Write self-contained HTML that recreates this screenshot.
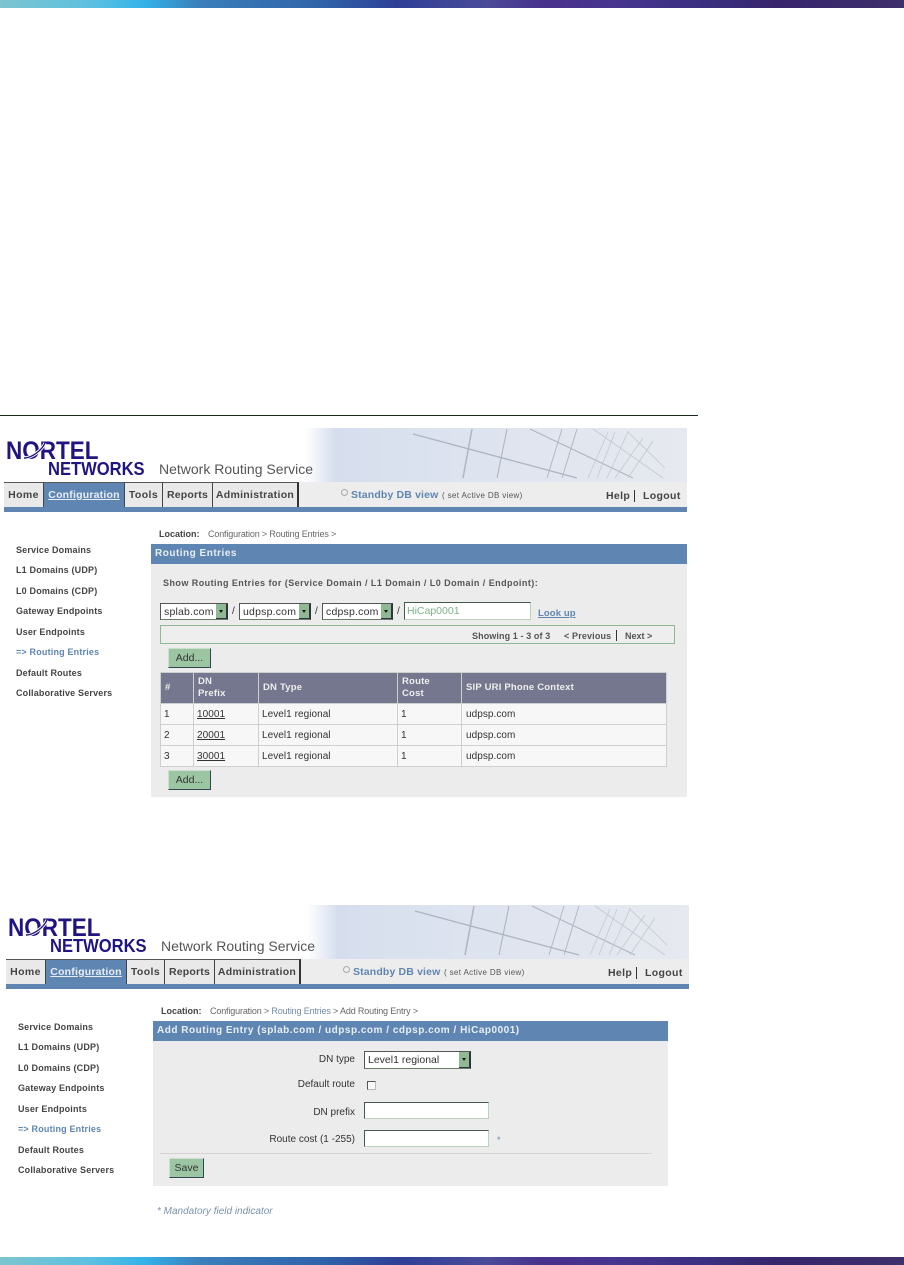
<!DOCTYPE html>
<html><head><meta charset="utf-8"><style>
html,body{margin:0;padding:0;background:#fff}
#p{position:relative;width:904px;height:1265px;overflow:hidden;background:#fff;font-family:"Liberation Sans",sans-serif}
.bar{position:absolute;left:0;width:904px;height:8px;background:linear-gradient(90deg,#7cc4cf 0,#5dc0e0 10%,#33b2e8 16%,#3b7fbb 22%,#2f62a8 36%,#2e3f96 44%,#4a4a98 54%,#48308c 60%,#47358f 68%,#3a2f80 78%,#37246c 86%,#3f2f6c 100%)}
.s{position:absolute;left:0;width:700px;height:400px;filter:blur(.35px)}
.t{position:absolute;white-space:nowrap;color:#333;font-size:9px;line-height:12px}
.b{font-weight:bold}
.m{letter-spacing:.18px;color:#444}
.box{position:absolute;box-sizing:border-box}
.tab{position:absolute;top:482px;height:25px;box-sizing:border-box;background:#e9e9e9;border-top:1px solid #555;border-right:1px solid #444;text-align:center;font-size:10.5px;line-height:25px;font-weight:bold;color:#444;letter-spacing:.4px}
.nav{color:#444}
.sel{position:absolute;box-sizing:border-box;background:#fff;border:1px solid #555;border-right:1px solid #333;border-bottom:1px solid #6a7d6a;font-size:10.5px;line-height:16px;color:#333;padding-left:3px;letter-spacing:.2px}
.sel i{position:absolute;right:0;top:0;bottom:0;width:11px;background:#8fb993;border-right:1px solid #334;border-bottom:1px solid #334;box-sizing:border-box}
.sel i:after{content:"";position:absolute;left:3px;top:6px;border:2px solid transparent;border-top:3px solid #111}
.btn{position:absolute;box-sizing:border-box;background:#9cc6a2;border-top:1px solid #cde0cf;border-left:1px solid #cde0cf;border-right:1px solid #345;border-bottom:1px solid #345;font-size:10.5px;color:#333;text-align:center}
.th{position:absolute;background:#75778f;color:#eee;font-size:9.5px;line-height:12px;font-weight:bold;box-sizing:border-box;padding-left:4px;display:flex;align-items:center;letter-spacing:.2px}
.td{position:absolute;background:#f7f7f7;color:#333;font-size:10px;box-sizing:border-box;padding-left:3px;line-height:22px;letter-spacing:.05px}
.inp{position:absolute;box-sizing:border-box;background:#fff;border:1px solid #bcd0be;border-top:1px solid #46584c;border-left:1px solid #46584c}
.lg{position:absolute;left:6px;top:437px;font-weight:bold;font-size:25px;line-height:28px;color:#1f1480;transform:scaleX(.9);transform-origin:left;white-space:nowrap}
.lg2{position:absolute;left:48px;top:460px;font-weight:bold;font-size:18px;line-height:19px;color:#1f1480;transform:scaleX(.92);transform-origin:left;white-space:nowrap}
</style></head><body><div id="p">
<div class="bar" style="top:0"></div>
<div class="bar" style="top:1257px"></div>
<div class="box" style="left:0;top:415px;width:698px;height:1px;background:#1a2a1a"></div>

<!-- SCREEN 1 -->
<div class="s" style="top:0;left:0">
<div class="box" style="left:305px;top:428px;width:382px;height:54px;background:linear-gradient(90deg,#fff 0,#d6deee 8%,#dde3ef 40%,#e6e9ef 100%)"></div>
<svg style="position:absolute;left:305px;top:428px" width="382" height="54" fill="none" stroke="#aeb6c2"><path d="M108 6L272 50" stroke-width="1.4"/><path d="M167 1L158 50" stroke-width="1.5"/><path d="M202 1L192 50" stroke-width="1.1"/><path d="M225 1L328 50" stroke-width="1.1"/><path d="M257 1L242 50" stroke-width=".9"/><path d="M272 1L257 50" stroke-width=".9"/><g stroke="#c2c8d2" stroke-width=".8"><path d="M288 1L358 50"/><path d="M303 4L283 50"/><path d="M310 4L292 50"/><path d="M323 4L302 50"/><path d="M338 10L310 50"/><path d="M348 13L323 50"/><path d="M322 3L360 40"/></g></svg>
<div class="lg">NORTEL</div>
<svg style="position:absolute;left:20px;top:438px" width="28" height="26" fill="none"><path d="M4 20C12 20 22 12 25 5" stroke="#fff" stroke-width="3.2"/><path d="M4 20C12 20 22 12 25 5" stroke="#1f1480" stroke-width="1.4"/></svg>
<div class="lg2">NETWORKS</div>
<div class="t" style="left:159px;top:461px;font-size:14px;line-height:17px;color:#555">Network Routing Service</div>
<div class="box" style="left:4px;top:482px;width:683px;height:25px;background:#ededed"></div>
<div class="box" style="left:4px;top:507px;width:683px;height:5px;background:#5f86b2"></div>
<div class="tab" style="left:4px;width:40px">Home</div>
<div class="tab" style="left:44px;width:81px;background:#5f86b2;color:#e8eef5;text-decoration:underline;letter-spacing:.2px">Configuration</div>
<div class="tab" style="left:125px;width:38px">Tools</div>
<div class="tab" style="left:163px;width:50px;letter-spacing:.2px">Reports</div>
<div class="tab" style="left:213px;width:86px;letter-spacing:.3px;border-right:2px solid #333">Administration</div>
<div class="box" style="left:341px;top:489px;width:7px;height:7px;border:1px solid #aaa;border-radius:50%"></div>
<div class="t b" style="left:351px;top:489px;font-size:10.5px;color:#5f86b2;letter-spacing:.15px">Standby DB view</div>
<div class="t" style="left:442px;top:490px;font-size:8px;color:#555;letter-spacing:.35px">( set Active DB view)</div>
<div class="t b nav" style="left:606px;top:490px;font-size:10.5px;letter-spacing:.35px">Help</div>
<div class="box" style="left:634px;top:490px;width:1px;height:12px;background:#333"></div>
<div class="t b nav" style="left:643px;top:490px;font-size:10.5px;letter-spacing:.35px">Logout</div>

<div class="t b" style="left:159px;top:528px;font-size:9px;color:#444">Location:</div>
<div class="t" style="left:208px;top:528px;font-size:9px;color:#666;letter-spacing:-.15px">Configuration &gt; Routing Entries &gt;</div>
<div class="t b m" style="left:16px;top:544px">Service Domains</div>
<div class="t b m" style="left:16px;top:564px">L1 Domains (UDP)</div>
<div class="t b m" style="left:16px;top:585px">L0 Domains (CDP)</div>
<div class="t b m" style="left:16px;top:605px">Gateway Endpoints</div>
<div class="t b m" style="left:16px;top:626px">User Endpoints</div>
<div class="t b m" style="left:16px;top:646px;color:#5f86b2">=&gt; Routing Entries</div>
<div class="t b m" style="left:16px;top:667px">Default Routes</div>
<div class="t b m" style="left:16px;top:687px">Collaborative Servers</div>

<div class="box" style="left:151px;top:564px;width:536px;height:233px;background:#ececec"></div>
<div class="box" style="left:151px;top:544px;width:536px;height:20px;background:#5f86b2"></div>
<div class="t b" style="left:155px;top:548px;font-size:10px;color:#e8eef5;letter-spacing:.5px">Routing Entries</div>
<div class="t b" style="left:163px;top:577px;font-size:9px;color:#555;letter-spacing:.45px">Show Routing Entries for (Service Domain / L1 Domain / L0 Domain / Endpoint):</div>

<div class="sel" style="left:160px;top:603px;width:68px;height:17px">splab.com<i></i></div>
<div class="t" style="left:232px;top:606px;font-size:10px">/</div>
<div class="sel" style="left:239px;top:603px;width:72px;height:17px">udpsp.com<i></i></div>
<div class="t" style="left:315px;top:606px;font-size:10px">/</div>
<div class="sel" style="left:322px;top:603px;width:71px;height:17px">cdpsp.com<i></i></div>
<div class="t" style="left:397px;top:606px;font-size:10px">/</div>
<div class="inp" style="left:404px;top:602px;width:127px;height:18px"></div>
<div class="t" style="left:407px;top:605px;font-size:10.5px;color:#7fb08a">HiCap0001</div>
<div class="t b" style="left:538px;top:608px;font-size:9.5px;color:#5f86b2;text-decoration:underline;letter-spacing:.1px">Look up</div>

<div class="box" style="left:160px;top:625px;width:515px;height:19px;border:1px solid #8fb993;background:#eee"></div>
<div class="t b" style="left:472px;top:630px;color:#555;letter-spacing:.1px">Showing 1 - 3 of 3</div>
<div class="t b" style="left:564px;top:630px;color:#555;letter-spacing:.15px">&lt; Previous</div>
<div class="box" style="left:616px;top:630px;width:1px;height:11px;background:#333"></div>
<div class="t b" style="left:625px;top:630px;color:#555">Next &gt;</div>

<div class="btn" style="left:168px;top:648px;width:43px;height:20px;line-height:18px">Add...</div>

<div class="box" style="left:160px;top:672px;width:507px;height:95px;background:#cfcfcf"></div>
<div class="th" style="left:161px;top:673px;width:32px;height:30px">#</div>
<div class="th" style="left:194px;top:673px;width:64px;height:30px">DN<br>Prefix</div>
<div class="th" style="left:259px;top:673px;width:138px;height:30px">DN Type</div>
<div class="th" style="left:398px;top:673px;width:63px;height:30px">Route<br>Cost</div>
<div class="th" style="left:462px;top:673px;width:204px;height:30px">SIP URI Phone Context</div>

<div class="td" style="left:161px;top:704px;width:32px;height:20px">1</div>
<div class="td" style="left:194px;top:704px;width:64px;height:20px;text-decoration:underline">10001</div>
<div class="td" style="left:259px;top:704px;width:138px;height:20px">Level1 regional</div>
<div class="td" style="left:398px;top:704px;width:63px;height:20px">1</div>
<div class="td" style="left:462px;top:704px;width:204px;height:20px;padding-left:4px">udpsp.com</div>

<div class="td" style="left:161px;top:725px;width:32px;height:20px">2</div>
<div class="td" style="left:194px;top:725px;width:64px;height:20px;text-decoration:underline">20001</div>
<div class="td" style="left:259px;top:725px;width:138px;height:20px">Level1 regional</div>
<div class="td" style="left:398px;top:725px;width:63px;height:20px">1</div>
<div class="td" style="left:462px;top:725px;width:204px;height:20px;padding-left:4px">udpsp.com</div>

<div class="td" style="left:161px;top:746px;width:32px;height:20px">3</div>
<div class="td" style="left:194px;top:746px;width:64px;height:20px;text-decoration:underline">30001</div>
<div class="td" style="left:259px;top:746px;width:138px;height:20px">Level1 regional</div>
<div class="td" style="left:398px;top:746px;width:63px;height:20px">1</div>
<div class="td" style="left:462px;top:746px;width:204px;height:20px;padding-left:4px">udpsp.com</div>

<div class="btn" style="left:168px;top:770px;width:43px;height:20px;line-height:18px">Add...</div>
</div>

<!-- SCREEN 2 -->
<div class="s" style="top:477px;left:2px">
<div class="box" style="left:305px;top:428px;width:382px;height:54px;background:linear-gradient(90deg,#fff 0,#d6deee 8%,#dde3ef 40%,#e6e9ef 100%)"></div>
<svg style="position:absolute;left:305px;top:428px" width="382" height="54" fill="none" stroke="#aeb6c2"><path d="M108 6L272 50" stroke-width="1.4"/><path d="M167 1L158 50" stroke-width="1.5"/><path d="M202 1L192 50" stroke-width="1.1"/><path d="M225 1L328 50" stroke-width="1.1"/><path d="M257 1L242 50" stroke-width=".9"/><path d="M272 1L257 50" stroke-width=".9"/><g stroke="#c2c8d2" stroke-width=".8"><path d="M288 1L358 50"/><path d="M303 4L283 50"/><path d="M310 4L292 50"/><path d="M323 4L302 50"/><path d="M338 10L310 50"/><path d="M348 13L323 50"/><path d="M322 3L360 40"/></g></svg>
<div class="lg">NORTEL</div>
<svg style="position:absolute;left:20px;top:438px" width="28" height="26" fill="none"><path d="M4 20C12 20 22 12 25 5" stroke="#fff" stroke-width="3.2"/><path d="M4 20C12 20 22 12 25 5" stroke="#1f1480" stroke-width="1.4"/></svg>
<div class="lg2">NETWORKS</div>
<div class="t" style="left:159px;top:461px;font-size:14px;line-height:17px;color:#555">Network Routing Service</div>
<div class="box" style="left:4px;top:482px;width:683px;height:25px;background:#ededed"></div>
<div class="box" style="left:4px;top:507px;width:683px;height:5px;background:#5f86b2"></div>
<div class="tab" style="left:4px;width:40px">Home</div>
<div class="tab" style="left:44px;width:81px;background:#5f86b2;color:#e8eef5;text-decoration:underline;letter-spacing:.2px">Configuration</div>
<div class="tab" style="left:125px;width:38px">Tools</div>
<div class="tab" style="left:163px;width:50px;letter-spacing:.2px">Reports</div>
<div class="tab" style="left:213px;width:86px;letter-spacing:.3px;border-right:2px solid #333">Administration</div>
<div class="box" style="left:341px;top:489px;width:7px;height:7px;border:1px solid #aaa;border-radius:50%"></div>
<div class="t b" style="left:351px;top:489px;font-size:10.5px;color:#5f86b2;letter-spacing:.15px">Standby DB view</div>
<div class="t" style="left:442px;top:490px;font-size:8px;color:#555;letter-spacing:.35px">( set Active DB view)</div>
<div class="t b nav" style="left:606px;top:490px;font-size:10.5px;letter-spacing:.35px">Help</div>
<div class="box" style="left:634px;top:490px;width:1px;height:12px;background:#333"></div>
<div class="t b nav" style="left:643px;top:490px;font-size:10.5px;letter-spacing:.35px">Logout</div>

<div class="t b" style="left:159px;top:528px;font-size:9px;color:#444">Location:</div>
<div class="t" style="left:208px;top:528px;font-size:9px;color:#666;letter-spacing:-.15px">Configuration &gt; <span style="color:#6f8ba8">Routing Entries</span> &gt; Add Routing Entry &gt;</div>
<div class="t b m" style="left:16px;top:544px">Service Domains</div>
<div class="t b m" style="left:16px;top:564px">L1 Domains (UDP)</div>
<div class="t b m" style="left:16px;top:585px">L0 Domains (CDP)</div>
<div class="t b m" style="left:16px;top:605px">Gateway Endpoints</div>
<div class="t b m" style="left:16px;top:626px">User Endpoints</div>
<div class="t b m" style="left:16px;top:646px;color:#5f86b2">=&gt; Routing Entries</div>
<div class="t b m" style="left:16px;top:667px">Default Routes</div>
<div class="t b m" style="left:16px;top:687px">Collaborative Servers</div>

<div class="box" style="left:151px;top:564px;width:515px;height:145px;background:#ececec"></div>
<div class="box" style="left:151px;top:544px;width:515px;height:20px;background:#5f86b2"></div>
<div class="t b" style="left:155px;top:548px;font-size:10px;color:#e8eef5;letter-spacing:.51px">Add Routing Entry (splab.com / udpsp.com / cdpsp.com / HiCap0001)</div>

<div class="t" style="right:347px;top:577px;font-size:10px">DN type</div>
<div class="sel" style="left:362px;top:574px;width:107px;height:18px;letter-spacing:0">Level1 regional<i></i></div>
<div class="t" style="right:347px;top:602px;font-size:10px">Default route</div>
<div class="box" style="left:365px;top:604px;width:9px;height:9px;background:#f8f8f8;border:1px solid #555;border-right-color:#bbb;border-bottom-color:#bbb"></div>
<div class="t" style="right:347px;top:630px;font-size:10px">DN prefix</div>
<div class="inp" style="left:362px;top:625px;width:125px;height:17px"></div>
<div class="t" style="right:347px;top:657px;font-size:10px">Route cost (1 -255)</div>
<div class="inp" style="left:362px;top:653px;width:125px;height:17px"></div>
<div class="t" style="left:495px;top:657px;font-size:9px;color:#6f8ba8">*</div>
<div class="box" style="left:158px;top:676px;width:492px;height:1px;background:#d4d4d4"></div>
<div class="btn" style="left:167px;top:681px;width:35px;height:20px;line-height:18px">Save</div>
<div class="t" style="left:155px;top:729px;font-size:10px;font-style:italic;color:#7a93ab">* Mandatory field indicator</div>
</div>
</div></body></html>
